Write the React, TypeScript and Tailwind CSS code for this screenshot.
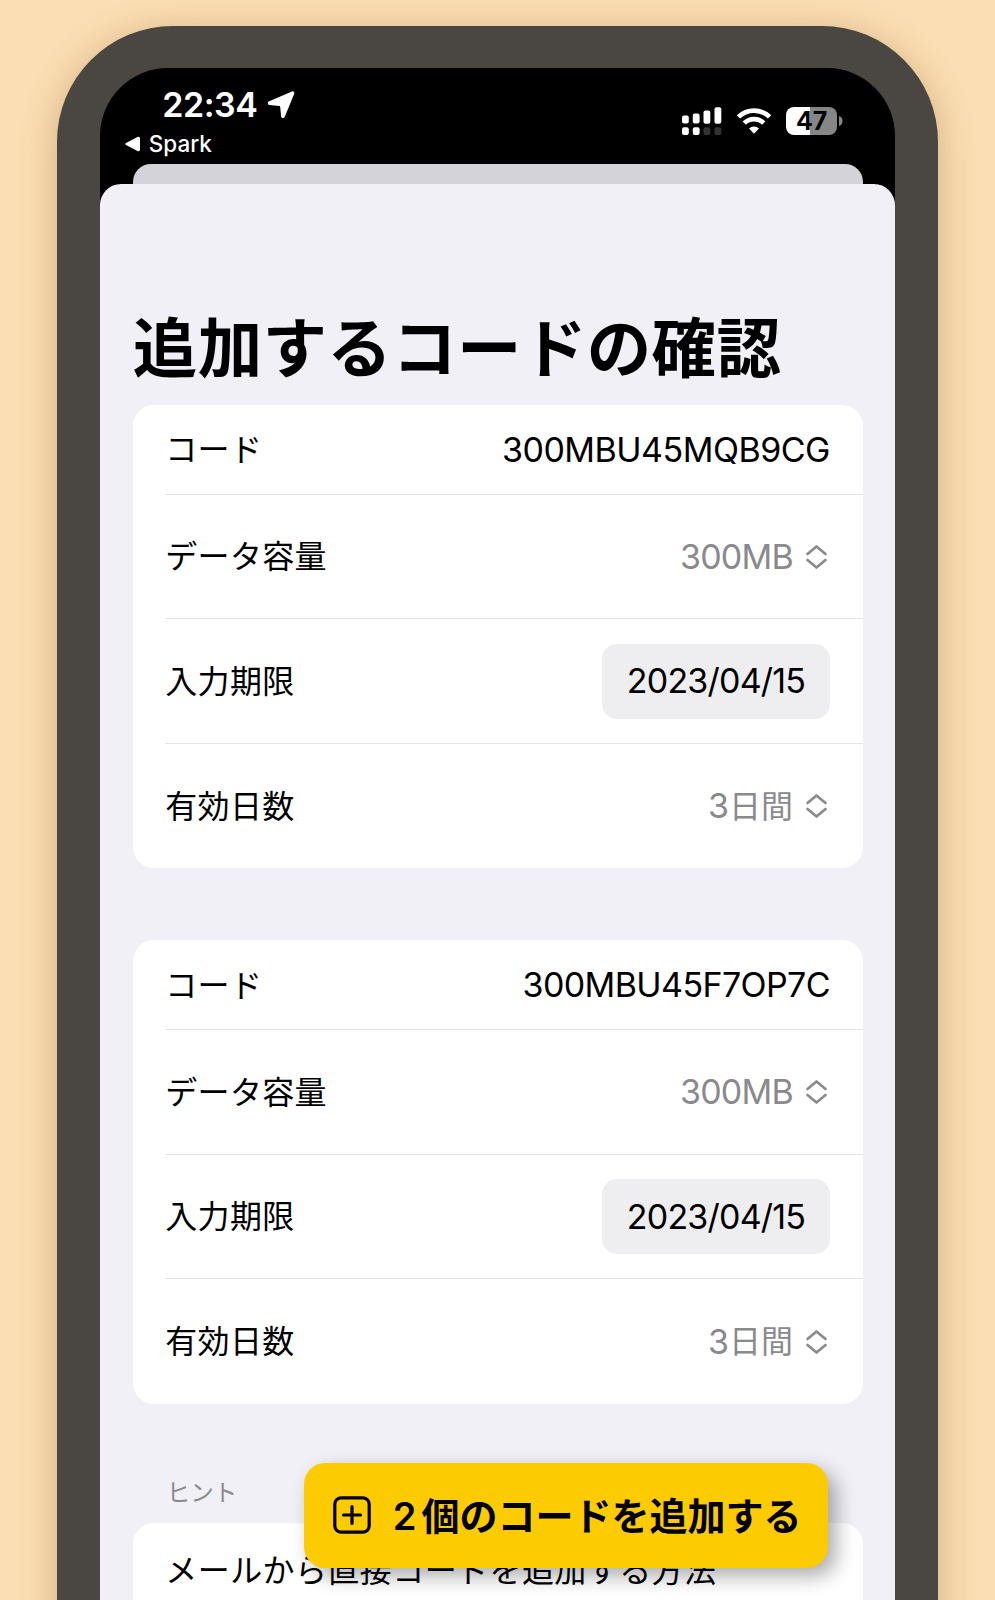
import type { ReactNode } from 'react';

function StatusBar() {
  return (
    <div className="flex h-[95.5px] justify-between text-white">
      <div className="pl-[24px] pt-[16px]">
        <div className="flex h-[42px] items-center gap-[8px] pl-[38.5px]">
          <span className="w-[97px] whitespace-nowrap text-[34px] font-semibold leading-[42px] tracking-[-0.500px]">22:34</span>
          <svg className="h-[28px] w-[28px]" viewBox="0 0 28 28" fill="white">
            <path d="M25 .5 2.200 10.300C.2 11.200.6 13.800 2.700 14L12 14.900c.8.1 1.100.3 1.200 1.100l.9 9.200c.2 2.200 2.800 2.600 3.700.6L27.200 2.700C27.800 1.200 26.400-.1 25 .5z" />
          </svg>
        </div>
        <div className="flex h-[36px] items-center gap-[9px] pl-[1px]">
          <svg className="h-[16px] w-[15px]" viewBox="0 0 15 16" fill="white">
            <path d="M1 6.900 12.500 1.100Q15 .2 15 2.500V13.500Q15 15.800 12.500 14.900L1 9.100Q-.5 8 1 6.900z" />
          </svg>
          <span className="text-[22.5px] font-medium leading-[36px]">Spark</span>
        </div>
      </div>
      <div className="mt-[38.700px] flex h-[28px] items-center pr-[52px]">
        <svg className="h-[28px] w-[40px]" viewBox="0 0 40 28" fill="white">
          <rect x="0" y="8.500" width="6.800" height="8" rx="2" />
          <rect x="10.800" y="6.400" width="6.800" height="10.200" rx="2" />
          <rect x="21.500" y="3.500" width="6.800" height="13.200" rx="2" />
          <rect x="32.500" y="0.200" width="6.800" height="16.600" rx="2" />
          <rect x="0" y="20.200" width="6.800" height="7.800" rx="2" />
          <rect x="10.800" y="20.200" width="6.800" height="7.800" rx="2" />
          <rect x="21.500" y="20.200" width="6.800" height="7.800" rx="2" fill="#333" />
          <rect x="32.500" y="20.200" width="6.800" height="7.800" rx="2" fill="#333" />
        </svg>
        <svg className="ml-[14px] h-[28px] w-[36px]" viewBox="0 0 36 28" fill="none" stroke="white" strokeWidth="4.800">
          <path d="M2.400 9.900a22.400 22.400 0 0 1 31.200 0" />
          <path d="M8.300 16.100a13.800 13.800 0 0 1 19.400 0" />
          <path d="M18 26.800l-5-5.200a7.200 7.200 0 0 1 10 0z" fill="white" stroke="none" />
        </svg>
        <div className="ml-[14px] flex h-[28px] w-[51px] items-center justify-center rounded-[8px] bg-linear-to-r from-white from-47% to-[#868686] to-47%">
          <span className="text-[25px] font-bold leading-[28px] text-black">47</span>
        </div>
        <svg className="ml-[1.500px] mr-[0.500px] h-[10px] w-[4px]" viewBox="0 0 4 10" fill="#868686">
          <path d="M0 0a5.300 5.300 0 0 1 0 10z" />
        </svg>
      </div>
    </div>
  );
}

function Row({ label, children, first, last }: { label: string; children: ReactNode; first?: boolean; last?: boolean }) {
  return (
    <div
      className={`flex items-center justify-between pr-[33px] pt-[1px] ${first ? 'h-[90px]' : 'h-[124.500px]'} ${last ? '' : 'border-b-[1.500px] border-[#e4e4e6]'}`}
    >
      <span className="pt-[1px] text-[32px] leading-[44px] tracking-[0.300px] text-black">{label}</span>
      {children}
    </div>
  );
}

function Picker({ children }: { children: ReactNode }) {
  return (
    <div className="flex items-center gap-[12px] pr-[2px] text-[34px] text-[#8a8a8e]">
      {children}
      <svg className="h-[26px] w-[23px]" viewBox="0 0 23 26" fill="none" stroke="#8a8a8e" strokeWidth="2.700" strokeLinecap="round" strokeLinejoin="round">
        <path d="M2.500 10l9-7.500L20.500 10M2.500 16l9 7.500L20.500 16" />
      </svg>
    </div>
  );
}

function CodeCard({ code, tracking }: { code: string; tracking: string }) {
  return (
    <section className="h-[463.500px] rounded-[21px] bg-white pl-[32.500px]">
      <Row label="コード" first>
        <span className={`whitespace-nowrap text-[34px] leading-[44px] text-black ${tracking}`}>{code}</span>
      </Row>
      <Row label="データ容量">
        <Picker>
          <span className="leading-[44px] tracking-[-0.750px]">300MB</span>
        </Picker>
      </Row>
      <Row label="入力期限">
        <span className="flex h-[75px] w-[228px] items-center justify-center rounded-[15px] bg-[#eeeef0] text-[34px] leading-[44px] tracking-[-0.800px] text-black">
          2023/04/15
        </span>
      </Row>
      <Row label="有効日数" last>
        <Picker>
          <span className="flex items-center leading-[44px]">
            3<span className="pt-[1px] text-[32px]">日間</span>
          </span>
        </Picker>
      </Row>
    </section>
  );
}

export default function App() {
  return (
    <div
      className="h-[1600px] w-[995px] overflow-hidden bg-[#fbdeb3] pl-[57.300px] pt-[25.500px] font-['Inter','Noto_Sans_CJK_JP',sans-serif]"
      lang="ja"
    >
      <div className="h-[1800px] w-[880.400px] rounded-[116px] bg-[#4a4641] px-[42.500px] pt-[42.500px] shadow-[0_6px_36px_rgba(120,80,20,0.33)]">
        <div className="h-[1740px] overflow-hidden rounded-t-[68px] bg-black">
          <StatusBar />
          <div className="ml-[33px] mr-[32.300px] h-[20.500px] rounded-t-[18px] bg-[#d4d3d9]" />
          <main className="relative h-[1600px] rounded-t-[21px] bg-[#f1f0f7] pl-[33px] pr-[32.200px] pt-[113.500px]">
            <h1 className="h-[107px] whitespace-nowrap pt-[2.500px] text-[64.500px] font-bold leading-[98px] tracking-[0.350px] text-black">追加するコードの確認</h1>
            <CodeCard code="300MBU45MQB9CG" tracking="tracking-[-0.500px]" />
            <div className="h-[72px]" />
            <CodeCard code="300MBU45F7OP7C" tracking="tracking-[-0.600px]" />
            <p className="h-[119px] pl-[34px] pt-[72.500px] text-[23.500px] leading-[34px] text-[#8a8a8e]">ヒント</p>
            <section className="h-[200px] rounded-[21px] bg-white pl-[32.500px] pt-[26px]">
              <p className="whitespace-nowrap text-[32px] leading-[44px] tracking-[0.420px] text-black">メールから直接コードを追加する方法</p>
            </section>
            <button className="absolute left-[204.500px] top-[1279px] flex h-[105px] w-[524px] items-center rounded-[21px] bg-[#fdcb02] pl-[28.500px] text-black shadow-[8px_8px_20px_rgba(0,0,0,0.33)]">
              <svg className="mb-[1px] h-[38px] w-[38px]" viewBox="0 0 38 38" fill="none" stroke="black" strokeWidth="3.200" strokeLinecap="round">
                <rect x="1.800" y="1.800" width="34.400" height="34.400" rx="6.500" />
                <path d="M19 10.500v17M10.500 19h17" />
              </svg>
              <span className="ml-[22px] flex whitespace-nowrap text-[38px] font-semibold leading-[50px]">
                <span className="mr-[5px]">2</span>
                <span className="font-bold">個のコードを追加する</span>
              </span>
            </button>
          </main>
        </div>
      </div>
    </div>
  );
}
